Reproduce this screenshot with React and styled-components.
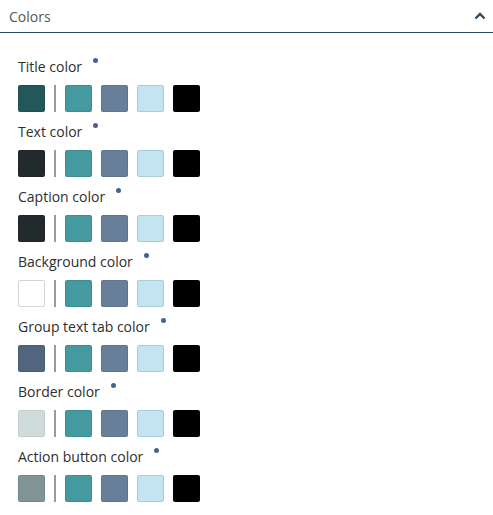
import React from 'react';
import styled, { createGlobalStyle } from 'styled-components';

const GlobalStyle = createGlobalStyle`
  body {
    margin: 0;
    background: #fff;
    font-family: "Open Sans", "Noto Sans", sans-serif;
  }
`;

const Panel = styled.div`
  width: 493px;
  background: #fff;
`;

const Header = styled.div`
  display: flex;
  align-items: center;
  justify-content: space-between;
  height: 32px;
  padding: 0 7px 0 9px;
  border-bottom: 1px solid #2d4a66;
  color: #555;
  font-size: 14px;
`;

const Body = styled.div`
  padding: 23px 18px 0;
`;

const Field = styled.div`
  margin-bottom: 9px;
`;

const Label = styled.div`
  display: flex;
  align-items: flex-start;
  height: 20px;
  padding-top: 1px;
  line-height: 20px;
  font-size: 14px;
  font-weight: 500;
  color: #2e2e2e;
  margin-bottom: 8px;
`;

const Dot = styled.span`
  width: 5px;
  height: 5px;
  border-radius: 50%;
  background: #45648c;
  margin: 1px 0 0 11px;
`;

const Swatches = styled.div`
  display: flex;
  align-items: center;
  gap: 9px;
`;

const Swatch = styled.div`
  width: 27px;
  height: 27px;
  box-sizing: border-box;
  border-radius: 2px;
  background: ${({ color }) => color};
  border: 1px solid ${({ edge }) => edge || 'rgba(0,0,0,0.08)'};
`;

const Divider = styled.div`
  width: 2px;
  height: 27px;
  background: #9a9a9a;
`;

const palette = [
  { color: '#459a9f' },
  { color: '#677f99' },
  { color: '#c3e4f1', edge: '#a9ccdb' },
  { color: '#000000' },
];

const fields = [
  { label: 'Title color', current: '#245759' },
  { label: 'Text color', current: '#212a2c' },
  { label: 'Caption color', current: '#212a2c' },
  { label: 'Background color', current: '#ffffff', edge: '#d4d4d4' },
  { label: 'Group text tab color', current: '#50667f' },
  { label: 'Border color', current: '#d2dbdc', edge: '#c3cccd' },
  { label: 'Action button color', current: '#7f9494' },
];

const Chevron = () => (
  <svg width="12" height="8" viewBox="0 0 12 8">
    <path d="M1.5 6.5 L6 2 L10.5 6.5" fill="none" stroke="#2d4a66" strokeWidth="2.4" />
  </svg>
);

export default function App() {
  return (
    <Panel>
      <GlobalStyle />
      <Header>
        <span>Colors</span>
        <Chevron />
      </Header>
      <Body>
        {fields.map((f) => (
          <Field key={f.label}>
            <Label>
              {f.label}
              <Dot />
            </Label>
            <Swatches>
              <Swatch color={f.current} edge={f.edge} />
              <Divider />
              {palette.map((p) => (
                <Swatch key={p.color} color={p.color} edge={p.edge} />
              ))}
            </Swatches>
          </Field>
        ))}
      </Body>
    </Panel>
  );
}
